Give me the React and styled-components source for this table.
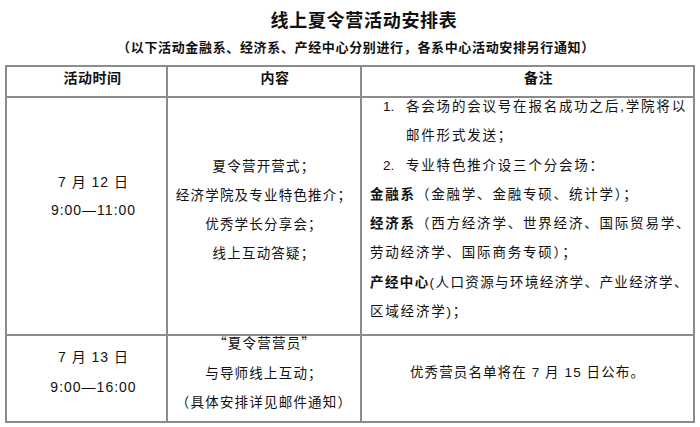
import React from 'react';
import styled, { createGlobalStyle } from 'styled-components';

const GlobalStyle = createGlobalStyle`
  html, body {
    margin: 0;
    padding: 0;
    background: #ffffff;
  }
  body {
    font-family: "Liberation Sans", "Noto Sans CJK SC", sans-serif;
    color: #111111;
  }
`;

const Page = styled.div`
  width: 700px;
  height: 427px;
  overflow: hidden;
  background: #ffffff;
`;

const Title = styled.h1`
  margin: 0;
  height: 38px;
  line-height: 38px;
  text-align: center;
  font-family: "Noto Sans CJK SC", sans-serif;
  font-size: 18px;
  font-weight: 700;
  letter-spacing: 0.7px;
  padding-left: 28px;
`;

const Subtitle = styled.p`
  margin: 0 0 9px;
  height: 18px;
  line-height: 18px;
  text-align: center;
  font-family: "Noto Sans CJK SC", sans-serif;
  font-size: 13px;
  font-weight: 700;
  letter-spacing: 0.65px;
  padding-left: 12px;
`;

const Table = styled.div`
  display: grid;
  grid-template-columns: 161px 194px 333px;
  grid-template-rows: 31px 238px 87px;
  margin-left: 5px;
  width: 690px;
  border-top: 2px solid #8c8c8c;
  border-left: 2px solid #8c8c8c;
  box-sizing: border-box;
`;

const Cell = styled.div`
  box-sizing: border-box;
  border-right: 2px solid #8c8c8c;
  border-bottom: 2px solid #8c8c8c;
  padding-left: ${p => p.$left || 0}px;
  text-align: ${p => (p.$align === 'left' ? 'left' : 'center')};
  overflow: visible;
`;

const HeadText = styled.div`
  line-height: 20px;
  font-family: "Noto Sans CJK SC", sans-serif;
  font-size: 14px;
  font-weight: 700;
  letter-spacing: 0.5px;
`;

const Lines = styled.div`
  margin-top: ${p => p.$offset}px;
  font-size: 13.5px;
  letter-spacing: ${p => p.$spacing || 1.1}px;
  line-height: ${p => p.$lh}px;
  white-space: nowrap;
`;

const TimeLines = styled(Lines)`
  font-size: 14px;
  letter-spacing: 1px;
`;

const Line = styled.div`
  letter-spacing: ${p => (p.$spacing ? `${p.$spacing}px` : 'inherit')};
`;

const Item = styled.div`
  display: flex;
  padding-left: 13px;
`;

const Num = styled.span`
  width: 23px;
  flex: none;
  letter-spacing: 0;
`;

const Label = styled.b`
  font-weight: 700;
`;

// full-width curly quote: the glyph hugs the text inside a 1em box
const QuoteMark = styled.span`
  display: inline-block;
  width: 14px;
  font-family: "Noto Sans CJK SC", sans-serif;
  letter-spacing: 0;
  text-align: ${p => (p.$open ? 'right' : 'left')};
  margin-right: ${p => (p.$open ? '1.2px' : 0)};
`;

export default function App() {
  return (
    <Page>
      <GlobalStyle />
      <Title>线上夏令营活动安排表</Title>
      <Subtitle>（以下活动金融系、经济系、产经中心分别进行，各系中心活动安排另行通知）</Subtitle>
      <Table>
        <Cell $left={12}><HeadText>活动时间</HeadText></Cell>
        <Cell $left={22}><HeadText>内容</HeadText></Cell>
        <Cell $left={22}><HeadText>备注</HeadText></Cell>

        <Cell $left={14}>
          <TimeLines $offset={70} $lh={28}>
            <div>7 月 12 日</div>
            <div>9:00—11:00</div>
          </TimeLines>
        </Cell>
        <Cell>
          <Lines $offset={54} $lh={29} $spacing={1.2}>
            <div>夏令营开营式；</div>
            <div>经济学院及专业特色推介；</div>
            <div>优秀学长分享会；</div>
            <div>线上互动答疑；</div>
          </Lines>
        </Cell>
        <Cell $left={8} $align="left">
          <Lines $offset={-6} $lh={29.3} $spacing={1.8}>
            <Item><Num>1.</Num><span>各会场的会议号在报名成功之后,学院将以<br />邮件形式发送；</span></Item>
            <Item><Num>2.</Num><span>专业特色推介设三个分会场：</span></Item>
            <Line><Label>金融系</Label>（金融学、金融专硕、统计学）；</Line>
            <Line><Label>经济系</Label>（西方经济学、世界经济、国际贸易学、</Line>
            <Line>劳动经济学、国际商务专硕）；</Line>
            <Line $spacing={1.4}><Label>产经中心</Label>(人口资源与环境经济学、产业经济学、</Line>
            <Line>区域经济学)；</Line>
          </Lines>
        </Cell>

        <Cell $left={14}>
          <TimeLines $offset={6} $lh={30}>
            <div>7 月 13 日</div>
            <div>9:00—16:00</div>
          </TimeLines>
        </Cell>
        <Cell>
          <Lines $offset={-8} $lh={29.5} $spacing={1.2}>
            <div><QuoteMark $open>“</QuoteMark>夏令营营员<QuoteMark>”</QuoteMark></div>
            <div>与导师线上互动；</div>
            <div>（具体安排详见邮件通知）</div>
          </Lines>
        </Cell>
        <Cell>
          <Lines $offset={22} $lh={29}>
            <div>优秀营员名单将在 7 月 15 日公布。</div>
          </Lines>
        </Cell>
      </Table>
    </Page>
  );
}
